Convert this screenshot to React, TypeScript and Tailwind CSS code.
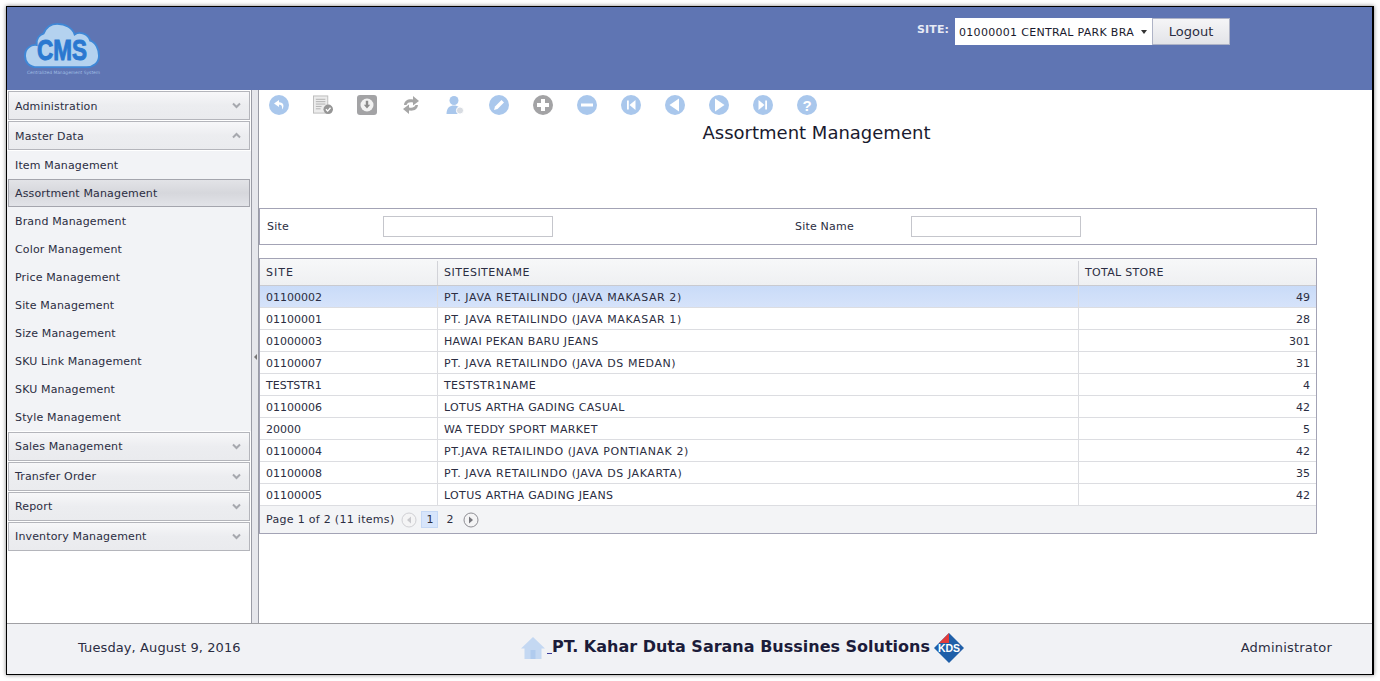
import { ReactNode } from 'react'

const font = { fontFamily: '"DejaVu Sans", Verdana, sans-serif' }

const rows = [
  ['01100002', 'PT. JAVA RETAILINDO (JAVA MAKASAR 2)', '49'],
  ['01100001', 'PT. JAVA RETAILINDO (JAVA MAKASAR 1)', '28'],
  ['01000003', 'HAWAI PEKAN BARU JEANS', '301'],
  ['01100007', 'PT. JAVA RETAILINDO (JAVA DS MEDAN)', '31'],
  ['TESTSTR1', 'TESTSTR1NAME', '4'],
  ['01100006', 'LOTUS ARTHA GADING CASUAL', '42'],
  ['20000', 'WA TEDDY SPORT MARKET', '5'],
  ['01100004', 'PT.JAVA RETAILINDO (JAVA PONTIANAK 2)', '42'],
  ['01100008', 'PT. JAVA RETAILINDO (JAVA DS JAKARTA)', '35'],
  ['01100005', 'LOTUS ARTHA GADING JEANS', '42'],
]

const masterItems = [
  'Item Management',
  'Assortment Management',
  'Brand Management',
  'Color Management',
  'Price Management',
  'Site Management',
  'Size Management',
  'SKU Link Management',
  'SKU Management',
  'Style Management',
]

function Chevron({ up }: { up?: boolean }) {
  return (
    <svg width="9" height="7" viewBox="0 0 9 7" className="mr-[8px]">
      <path d={up ? 'M1 5.5 L4.5 2 L8 5.5' : 'M1 1.5 L4.5 5 L8 1.5'} fill="none" stroke="#a6a8ae" strokeWidth="2" />
    </svg>
  )
}

function PanelHeader({ title, up, low }: { title: string; up?: boolean; low?: boolean }) {
  return (
    <div className="mx-px flex h-[29px] w-[242px] items-center justify-between border border-[#b4b5bb] bg-gradient-to-b from-[#f7f7f9] via-[#ecedf0] to-[#eaebee] pl-[6px] text-[#2b2d42]">
      <span className={low ? 'pt-[2px]' : ''}>{title}</span>
      <Chevron up={up} />
    </div>
  )
}

function Disc({ color, children }: { color: string; children: ReactNode }) {
  return (
    <svg width="20" height="20" viewBox="0 0 20 20">
      <circle cx="10" cy="10" r="10" fill={color} />
      {children}
    </svg>
  )
}

const blue = '#a9c7ec'
const gray = '#a3a3a5'

const toolIcons: ReactNode[] = [
  <Disc color={blue} key="back">
    <path d="M10 5 L5 8.5 L10 12 L10 9.8 C12.5 9.8 13.5 11 13 14.5 C15.5 11.5 15 7.3 10 7.2 Z" fill="#fff" />
  </Disc>,
  <svg width="21" height="20" viewBox="0 0 21 20" key="doc">
    <rect x="0.5" y="0.5" width="15" height="18" fill="#ececec" stroke="#bcbcbc" />
    <path d="M3 4h10M3 6.5h10M3 9h10M3 11.5h6M3 14h5" stroke="#b0b0b0" strokeWidth="1" />
    <circle cx="16" cy="14.5" r="5" fill="#969696" />
    <path d="M13.6 14.5 L15.4 16.4 L18.4 12.9" fill="none" stroke="#fff" strokeWidth="1.4" />
  </svg>,
  <svg width="20" height="20" viewBox="0 0 20 20" key="down">
    <rect width="20" height="20" rx="3" fill={gray} />
    <circle cx="10" cy="10" r="6.5" fill="#f2f2f2" />
    <path d="M8.8 5.8h2.4v4h2L10 13.6 6.8 9.8h2z" fill="#8c8c8c" />
  </svg>,
  <svg width="20" height="20" viewBox="0 0 20 20" key="sync">
    <path d="M3 10 C3.5 5.5 7 3.8 12 4.5 L12 1 L18 6 L12 10.5 L12 7.6 C9 7 6.5 7.5 5.5 10 Z" fill="#a6a6a6" />
    <path d="M17 10 C16.5 14.5 13 16.2 8 15.5 L8 19 L2 14 L8 9.5 L8 12.4 C11 13 13.5 12.5 14.5 10 Z" fill="#a6a6a6" />
  </svg>,
  <svg width="20" height="20" viewBox="0 0 20 20" key="user">
    <circle cx="9" cy="5.5" r="4.5" fill={blue} />
    <path d="M1.5 19 C1.5 12.5 5 10.5 9 10.5 C13 10.5 16 12.5 16.5 19 Z" fill={blue} />
    <circle cx="15" cy="15.5" r="3.6" fill="#d8dce2" stroke="#fff" />
  </svg>,
  <Disc color={blue} key="edit">
    <path d="M5 15 L6 11.5 L12.5 5 L15 7.5 L8.5 14 Z" fill="#fff" />
  </Disc>,
  <Disc color={gray} key="plus">
    <path d="M8 4h4v4h4v4h-4v4H8v-4H4V8h4z" fill="#fff" />
  </Disc>,
  <Disc color={blue} key="minus">
    <rect x="4" y="8.5" width="12" height="3" fill="#fff" />
  </Disc>,
  <Disc color={blue} key="first">
    <path d="M6 5.5h1.8v9H6zM14.5 5 L8.5 10 L14.5 15Z" fill="#fff" />
  </Disc>,
  <Disc color={blue} key="prev">
    <path d="M14 3.5 L4.5 10 L14 16.5Z" fill="#fff" />
  </Disc>,
  <Disc color={blue} key="next">
    <path d="M6 3.5 L15.5 10 L6 16.5Z" fill="#fff" />
  </Disc>,
  <Disc color={blue} key="last">
    <path d="M14 5.5h-1.8v9H14zM5.5 5 L11.5 10 L5.5 15Z" fill="#fff" />
  </Disc>,
  <Disc color={blue} key="help">
    <text x="10" y="15.5" textAnchor="middle" fontSize="15" fontWeight="700" fill="#fff" fontFamily="Liberation Sans">?</text>
  </Disc>,
]

function Logo() {
  return (
    <div className="relative h-[68px] w-[82px]">
      <svg width="76" height="46" viewBox="0 0 78 52" preserveAspectRatio="none" className="absolute left-0 top-[7px]">
        <path
          d="M14 50 C5 50 1 44 1 37 C1 29 7 24 13 25 C12 18 16 13 20 12 C23 4 29 1 34 1 C43 1 50 6 52 13 C57 9 66 12 68 20 C74 22 77 30 77 37 C77 45 71 50 64 50 Z"
          fill="#b4d2ef"
          stroke="#3f87d6"
          strokeWidth="2"
        />
      </svg>
      <span className="absolute left-[13px] top-[15px] origin-left scale-x-[0.75] font-['Liberation_Sans'] text-[30px] leading-[38px] font-bold text-[#2a78d0] [-webkit-text-stroke:1px_#2a78d0]">
        CMS
      </span>
      <span className="absolute left-[3px] top-[54px] whitespace-nowrap text-[4.4px] leading-[6px] text-[#9fbde4]">
        Centralized Management System
      </span>
    </div>
  )
}

function KdsLogo() {
  return (
    <svg width="30" height="30" viewBox="0 0 30 30">
      <path d="M15 0 L30 15 L15 30 L0 15 Z" fill="#1f5fa8" />
      <path d="M15 0 L5 10 L15 10 Z" fill="#e23b3b" />
      <text x="15" y="19" textAnchor="middle" fontSize="10.5" fontWeight="700" fill="#fff" fontFamily="Liberation Sans">KDS</text>
    </svg>
  )
}

function HomeIcon() {
  return (
    <svg width="24" height="24" viewBox="0 0 24 24">
      <path d="M12 1 L24 12.5 L20.5 12.5 L20.5 23 L3.5 23 L3.5 12.5 L0 12.5 Z" fill="#c4d8f2" />
      <rect x="9.5" y="14" width="5" height="9" fill="#b0cbee" />
    </svg>
  )
}

function Field({ label }: { label: string }) {
  return (
    <>
      <span className="w-[116px] pt-px tracking-[0.2px] text-[#2b2d42]">{label}</span>
      <input className="h-[21px] w-[170px] border border-[#c5c6cc] bg-white" />
    </>
  )
}

export default function App() {
  return (
    <div className="h-[681px] w-full bg-white px-[6px] pt-[6px] pb-[6px] text-[11px] leading-[14px]" style={font}>
      <div className="flex h-[669px] w-[1368px] flex-col border border-r-2 border-black bg-white shadow-[0_0_4px_rgba(0,0,0,0.5)]">
        <header className="flex h-[83px] shrink-0 justify-between bg-[#5f75b3]">
          <div className="pl-[17px] pt-[9px]">
            <Logo />
          </div>
          <div className="flex items-start pr-[142px] pt-[11px]">
            <span className="mr-[6px] mt-[5px] font-bold tracking-[0.1px] text-[#e6eaf5]">SITE:</span>
            <div className="flex h-[27px] w-[197px] items-center justify-between bg-white pl-[4px] pr-[5px] text-[#1a1a2e]">
              <span className="whitespace-nowrap pt-[2px] tracking-[0.3px]">01000001 CENTRAL PARK BRA</span>
              <span className="h-0 w-0 border-x-[3.5px] border-t-[4px] border-x-transparent border-t-[#333]" />
            </div>
            <button className="h-[27px] w-[78px] border border-[#aeb3c6] bg-gradient-to-b from-[#f5f5f7] to-[#e3e4e8] text-[13px] text-[#2b2d42]">
              Logout
            </button>
          </div>
        </header>

        <div className="flex min-h-0 flex-1">
          <aside className="flex w-[245px] shrink-0 flex-col gap-px border-r border-[#9a9ca6] pt-px tracking-[0.15px]">
            <PanelHeader title="Administration" low />
            <PanelHeader title="Master Data" up low />
            <div className="flex h-[280px] flex-col bg-[#f2f3f6] pt-px">
              {masterItems.map((item) =>
                item === 'Assortment Management' ? (
                  <div
                    key={item}
                    className="mx-px -mt-px mb-px flex h-[28px] w-[242px] items-center border border-[#a4a5ad] bg-gradient-to-b from-[#e2e3e7] via-[#d6d7dc] to-[#e2e3e8] pl-[6px] pt-[2px] text-[#2b2d42]"
                  >
                    {item}
                  </div>
                ) : (
                  <div key={item} className="flex h-[28px] items-center pl-[8px] text-[#2b2d42] last:h-[27px]">
                    {item}
                  </div>
                ),
              )}
            </div>
            <PanelHeader title="Sales Management" />
            <PanelHeader title="Transfer Order" />
            <PanelHeader title="Report" />
            <PanelHeader title="Inventory Management" />
          </aside>

          <div className="flex w-[7px] shrink-0 items-center justify-center border-r border-[#9a9ca6] bg-[#e6e7ec]">
            <span className="h-0 w-0 border-y-[3px] border-r-[3px] border-y-transparent border-r-[#777]" />
          </div>

          <main className="min-w-0 flex-1">
            <div className="flex h-[30px] items-center gap-[24px] pl-[10px]">
              {toolIcons.map((icon, i) => (
                <div key={i} className="flex w-[20px] shrink-0 justify-center">
                  {icon}
                </div>
              ))}
            </div>
            <h1 className="w-[1115px] text-center text-[18px] leading-[26px] text-[#1a1a2e]">Assortment Management</h1>

            <div className="mt-[62px] flex h-[37px] w-[1058px] items-center border border-[#a3a3b5] pl-[7px]">
              <Field label="Site" />
              <div className="w-[242px]" />
              <Field label="Site Name" />
            </div>

            <div className="mt-[13px] w-[1058px] border border-[#a3a3b5] text-[#2b2d42]">
              <div className="flex h-[27px] border-b border-[#c9cad0] bg-gradient-to-b from-[#f7f8f9] to-[#eff0f2] pt-[2px]">
                <div className="flex w-[178px] items-center border-r border-[#d2d3d8] pl-[6px] tracking-[1px]">SITE</div>
                <div className="flex w-[641px] items-center border-r border-[#d2d3d8] pl-[6px] tracking-[0.5px]">SITESITENAME</div>
                <div className="flex flex-1 items-center pl-[6px] tracking-[0.3px]">TOTAL STORE</div>
              </div>
              {rows.map((row, i) => (
                <div
                  key={row[0]}
                  className={`flex h-[22px] border-b border-[#dcdde1] ${i === 0 ? 'bg-gradient-to-b from-[#c9dbf8] to-[#d6e3fa]' : 'bg-white'}`}
                >
                  <div className="flex w-[178px] items-center border-r border-[#dcdde1] pl-[6px] pt-[2px]">{row[0]}</div>
                  <div
                    className={`flex w-[641px] items-center border-r border-[#dcdde1] pl-[6px] pt-[2px] ${row[1].startsWith('PT') ? 'tracking-[0.58px]' : 'tracking-[0.35px]'}`}
                  >
                    {row[1]}
                  </div>
                  <div className="flex flex-1 items-center justify-end pr-[6px] pt-[2px]">{row[2]}</div>
                </div>
              ))}
              <div className="flex h-[27px] items-center bg-[#f3f4f6] pl-[6px]">
                <span className="mr-[7px] tracking-[0.3px]">Page 1 of 2 (11 items)</span>
                <svg width="16" height="16" viewBox="0 0 16 16">
                  <circle cx="8" cy="8" r="7" fill="#f4f4f5" stroke="#d0d0d4" />
                  <path d="M10 4.5 L6 8 L10 11.5Z" fill="#c8c8cc" />
                </svg>
                <span className="ml-[4px] flex h-[17px] w-[17px] items-center justify-center border border-[#c5d8f5] bg-[#d7e5fb]">1</span>
                <span className="flex h-[17px] w-[23px] items-center justify-center">2</span>
                <svg width="16" height="16" viewBox="0 0 16 16" className="ml-[2px]">
                  <circle cx="8" cy="8" r="7" fill="#f4f4f5" stroke="#8e8e94" />
                  <path d="M6 4.5 L10 8 L6 11.5Z" fill="#77777d" />
                </svg>
              </div>
            </div>
          </main>
        </div>

        <footer className="flex h-[51px] shrink-0 items-center justify-between border-t border-[#a0a0a4] bg-[#f1f2f5] pb-[3px] text-[13px] text-[#2b2d42]">
          <span className="ml-[71px] w-[420px] tracking-[0.1px]">Tuesday, August 9, 2016</span>
          <div className="flex items-center">
            <HomeIcon />
            <span className="ml-[2px] mt-[12px] h-px w-[5px] bg-[#3a3a9a]" />
            <span className="mb-[2px] mr-[4px] text-[16px] leading-[22px] font-bold text-[#1c1c3a]">
              PT. Kahar Duta Sarana Bussines Solutions
            </span>
            <KdsLogo />
          </div>
          <span className="mr-[40px] w-[345px] text-right tracking-[0.2px]">Administrator</span>
        </footer>
      </div>
    </div>
  )
}
